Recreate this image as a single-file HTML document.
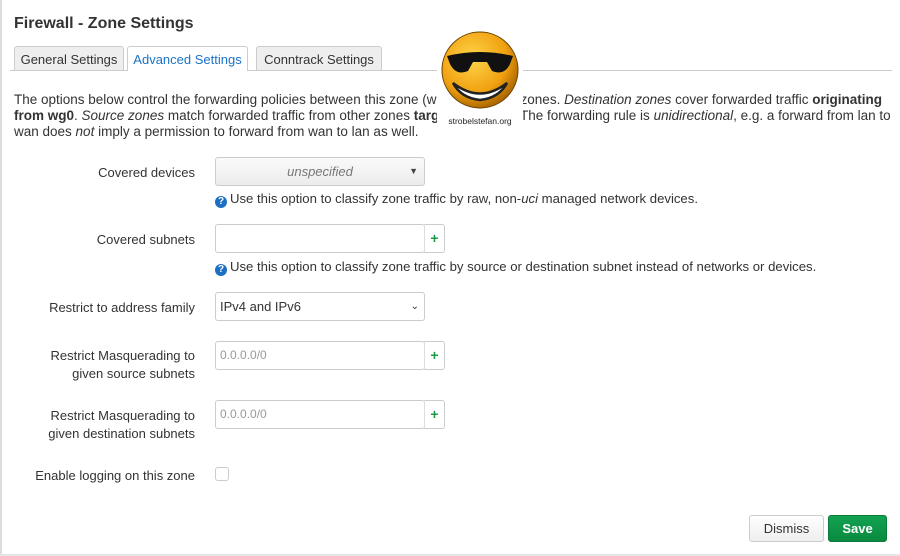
<!DOCTYPE html>
<html><head><style>
body{margin:0;width:900px;height:556px;background:#fff;font-family:"Liberation Sans",Arial,sans-serif;color:#333;position:relative;overflow:hidden;font-size:13px}
.abs{position:absolute}
h1{position:absolute;left:14px;top:15px;margin:0;font-size:16px;font-weight:bold;color:#333}
.tab{position:absolute;top:46px;height:24px;border:1px solid #ccc;border-bottom:none;background:#eee;border-radius:3px 3px 0 0;font-size:13px;line-height:26px;text-align:center;color:#333;box-sizing:border-box}
.lbl{position:absolute;right:705px;font-size:13px;text-align:right;line-height:18px}
.inp{position:absolute;left:215px;width:210px;height:29px;border:1px solid #ccc;border-radius:3px;box-sizing:border-box;background:#fff;font-size:12px;line-height:27px;padding-left:4px}
.plus{position:absolute;left:424px;width:21px;height:29px;border:1px solid #ccc;border-left:1px solid #ddd;border-radius:0 3px 3px 0;box-sizing:border-box;color:#1a9948;font-weight:bold;text-align:center;line-height:26px;font-size:14px;background:#fff}
.help{position:absolute;left:215px;font-size:13.15px}
.q{display:inline-block;width:12px;height:12px;border-radius:50%;background:#1d6fc4;color:#fff;font-size:10px;font-weight:bold;text-align:center;line-height:12px;vertical-align:-1px;margin-right:3px}
</style></head><body>
<div class="abs" style="left:0;top:0;width:2px;height:556px;background:#ddd"></div>
<h1>Firewall - Zone Settings</h1>
<div class="abs" style="left:10px;top:70px;width:882px;height:1px;background:#ccc"></div>
<div class="tab" style="left:14px;width:110px">General Settings</div>
<div class="tab" style="left:127px;width:121px;height:25px;background:#fff;color:#1a73c8">Advanced Settings</div>
<div class="tab" style="left:256px;width:126px">Conntrack Settings</div>
<div class="abs" style="left:14px;top:92px;width:880px;font-size:13.5px;line-height:16px;white-space:nowrap">The options below control the forwarding policies between this zone (wg0) and other zones. <i>Destination zones</i> cover forwarded traffic <b>originating</b><br><b>from wg0</b>. <i>Source zones</i> match forwarded traffic from other zones <b>targeted at wg0</b>. The forwarding rule is <i>unidirectional</i>, e.g. a forward from lan to<br>wan does <i>not</i> imply a permission to forward from wan to lan as well.</div>
<div class="abs" style="left:437px;top:30px;width:86px;height:98px;background:#fff">
<svg width="86" height="98" viewBox="0 0 86 98">
<defs><radialGradient id="g" cx="40%" cy="35%" r="65%"><stop offset="0" stop-color="#ffd54a"/><stop offset="0.7" stop-color="#f0a010"/><stop offset="1" stop-color="#b06a00"/></radialGradient></defs>
<circle cx="43" cy="40" r="38" fill="url(#g)" stroke="#6a4000" stroke-width="1"/>
<path d="M10 26 Q43 18 76 26 L73 34 Q67 46 55 41 L50 32 L36 32 L31 41 Q19 46 13 34Z" fill="#111"/>
<path d="M16 53 Q43 74 70 53 Q62 68 43 70 Q24 68 16 53Z" fill="#fff" stroke="#222" stroke-width="2.5"/>
<text x="43" y="94" font-size="8.5" text-anchor="middle" font-family="Liberation Sans" fill="#222">strobelstefan.org</text>
</svg></div>

<div class="lbl" style="top:164px">Covered devices</div>
<div class="inp" style="top:157px;background:linear-gradient(#fafafa,#ececec);text-align:center;color:#777;font-style:italic;font-size:13px;padding:0">unspecified<span style="position:absolute;right:6px;top:0;font-style:normal;color:#444;font-size:9px">▼</span></div>
<div class="help" style="top:191px"><span class="q">?</span>Use this option to classify zone traffic by raw, non-<i>uci</i> managed network devices.</div>

<div class="lbl" style="top:231px">Covered subnets</div>
<div class="inp" style="top:224px"></div><div class="plus" style="top:224px">+</div>
<div class="help" style="top:259px"><span class="q">?</span>Use this option to classify zone traffic by source or destination subnet instead of networks or devices.</div>

<div class="lbl" style="top:299px">Restrict to address family</div>
<div class="inp" style="top:292px;font-size:13px;color:#333">IPv4 and IPv6<span style="position:absolute;right:5px;top:0;font-size:10px">⌄</span></div>

<div class="lbl" style="top:347px">Restrict Masquerading to<br>given source subnets</div>
<div class="inp" style="top:341px;color:#999">0.0.0.0/0</div><div class="plus" style="top:341px">+</div>

<div class="lbl" style="top:407px">Restrict Masquerading to<br>given destination subnets</div>
<div class="inp" style="top:400px;color:#999">0.0.0.0/0</div><div class="plus" style="top:400px">+</div>

<div class="lbl" style="top:467px">Enable logging on this zone</div>
<div class="abs" style="left:215px;top:467px;width:14px;height:14px;border:1px solid #ccc;border-radius:3px;box-sizing:border-box"></div>

<div class="abs" style="left:749px;top:515px;width:75px;height:27px;border:1px solid #ccc;border-radius:3px;box-sizing:border-box;background:linear-gradient(#fff,#eee);text-align:center;line-height:25px;font-size:13px">Dismiss</div>
<div class="abs" style="left:828px;top:515px;width:59px;height:27px;border:1px solid #0c7a38;border-radius:3px;box-sizing:border-box;background:linear-gradient(#12a352,#0a8a3e);color:#fff;text-align:center;line-height:25px;font-size:13px;font-weight:bold">Save</div>
<div class="abs" style="left:0;top:554px;width:900px;height:2px;background:#e5e5e5"></div>
</body></html>
